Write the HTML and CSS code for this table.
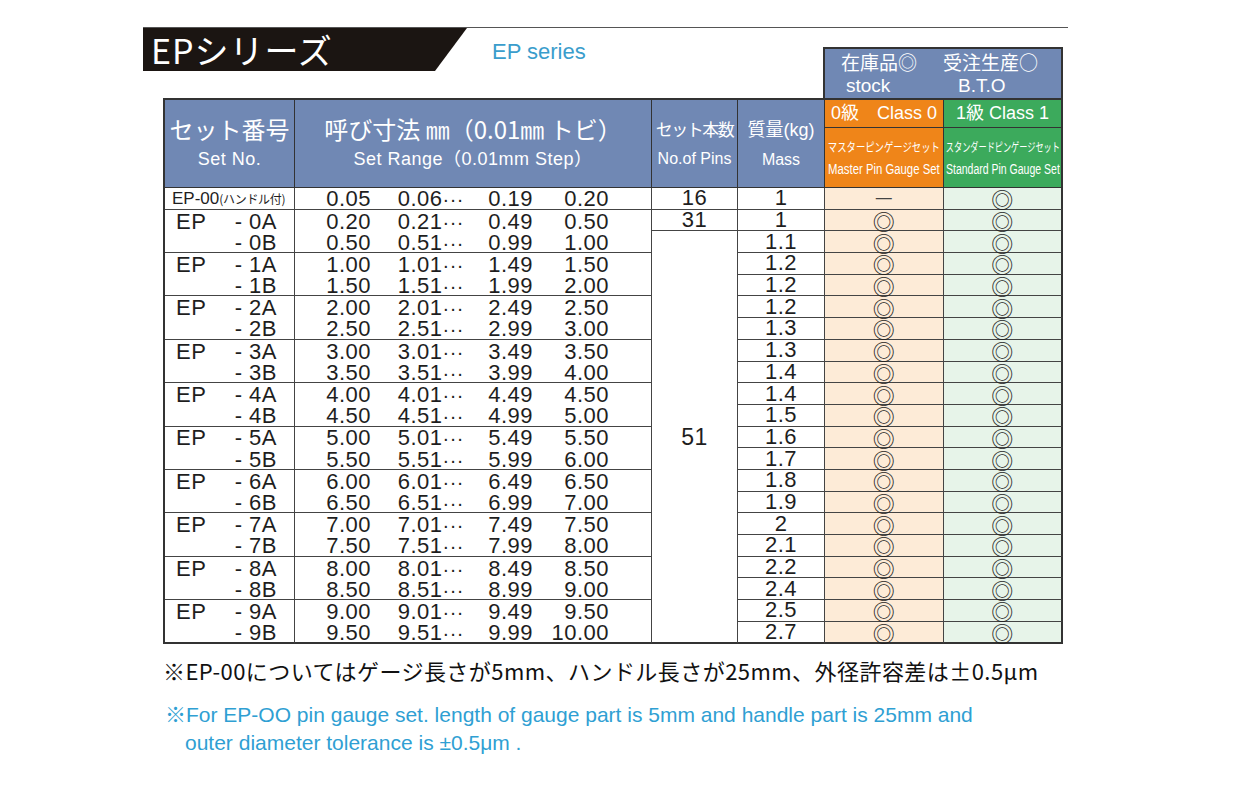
FILE: index.html
```html
<!DOCTYPE html>
<html lang="ja">
<head>
<meta charset="utf-8">
<title>EPシリーズ</title>
<link rel="stylesheet" href="styles.css">
</head>
<body>
<div class="page">
  <div class="top">
    <div class="banner">EPシリーズ</div>
    <div class="en-title">EP series</div>
    <div class="stock">
      <div class="stock-l1"><span>在庫品◎</span><span class="s-right">受注生産○</span></div>
      <div class="stock-l2"><span class="s-left">stock</span><span>B.T.O</span></div>
    </div>
  </div>

  <table class="spec">
    <colgroup>
      <col class="w-sn"><col class="w-rg"><col class="w-pn"><col class="w-ms"><col class="w-cl"><col class="w-cl">
    </colgroup>
    <thead>
      <tr class="h1">
        <th rowspan="2" class="hd"><div class="jp">セット番号</div><div class="en">Set No.</div></th>
        <th rowspan="2" class="hd"><div class="jp">呼び寸法 ㎜（0.01㎜ トビ）</div><div class="en">Set Range（0.01mm Step）</div></th>
        <th rowspan="2" class="hd"><div class="jp sm">セット本数</div><div class="en sm">No.of Pins</div></th>
        <th rowspan="2" class="hd"><div class="jp sm2">質量<span class="lat">(kg)</span></div><div class="en sm">Mass</div></th>
        <th class="c0h">0級　Class 0</th>
        <th class="c1h">1級 Class 1</th>
      </tr>
      <tr class="h2">
        <th class="c0s"><div class="sub"><span class="sub-jp m">マスターピンゲージセット</span><span class="sub-en m">Master Pin Gauge Set</span></div></th>
        <th class="c1s"><div class="sub"><span class="sub-jp s">スタンダードピンゲージセット</span><span class="sub-en s">Standard Pin Gauge Set</span></div></th>
      </tr>
    </thead>
    <tbody>
      <tr class="z">
        <td class="sn"><div class="sn00">EP-00<span class="small">(ハンドル付)</span></div></td>
        <td class="rg"><div class="rgd"><span>0.05</span><span>0.06<i>···</i></span><span>0.19</span><span>0.20</span></div></td>
        <td class="pn">16</td><td class="ms">1</td><td class="c0 nd">—</td><td class="c1">◎</td>
      </tr>
      <tr class="a">
        <td class="sn"><div class="snA"><span>EP</span><span>- 0A</span></div></td>
        <td class="rg"><div class="rgd"><span>0.20</span><span>0.21<i>···</i></span><span>0.49</span><span>0.50</span></div></td>
        <td class="pn">31</td><td class="ms">1</td><td class="c0">◎</td><td class="c1">◎</td>
      </tr>
      <tr class="b">
        <td class="sn"><div class="snB">- 0B</div></td>
        <td class="rg"><div class="rgd"><span>0.50</span><span>0.51<i>···</i></span><span>0.99</span><span>1.00</span></div></td>
        <td class="pn big" rowspan="19">51</td><td class="ms">1.1</td><td class="c0">◎</td><td class="c1">◎</td>
      </tr>
      <tr class="a">
        <td class="sn"><div class="snA"><span>EP</span><span>- 1A</span></div></td>
        <td class="rg"><div class="rgd"><span>1.00</span><span>1.01<i>···</i></span><span>1.49</span><span>1.50</span></div></td>
        <td class="ms">1.2</td><td class="c0">◎</td><td class="c1">◎</td>
      </tr>
      <tr class="b">
        <td class="sn"><div class="snB">- 1B</div></td>
        <td class="rg"><div class="rgd"><span>1.50</span><span>1.51<i>···</i></span><span>1.99</span><span>2.00</span></div></td>
        <td class="ms">1.2</td><td class="c0">◎</td><td class="c1">◎</td>
      </tr>
      <tr class="a">
        <td class="sn"><div class="snA"><span>EP</span><span>- 2A</span></div></td>
        <td class="rg"><div class="rgd"><span>2.00</span><span>2.01<i>···</i></span><span>2.49</span><span>2.50</span></div></td>
        <td class="ms">1.2</td><td class="c0">◎</td><td class="c1">◎</td>
      </tr>
      <tr class="b">
        <td class="sn"><div class="snB">- 2B</div></td>
        <td class="rg"><div class="rgd"><span>2.50</span><span>2.51<i>···</i></span><span>2.99</span><span>3.00</span></div></td>
        <td class="ms">1.3</td><td class="c0">◎</td><td class="c1">◎</td>
      </tr>
      <tr class="a">
        <td class="sn"><div class="snA"><span>EP</span><span>- 3A</span></div></td>
        <td class="rg"><div class="rgd"><span>3.00</span><span>3.01<i>···</i></span><span>3.49</span><span>3.50</span></div></td>
        <td class="ms">1.3</td><td class="c0">◎</td><td class="c1">◎</td>
      </tr>
      <tr class="b">
        <td class="sn"><div class="snB">- 3B</div></td>
        <td class="rg"><div class="rgd"><span>3.50</span><span>3.51<i>···</i></span><span>3.99</span><span>4.00</span></div></td>
        <td class="ms">1.4</td><td class="c0">◎</td><td class="c1">◎</td>
      </tr>
      <tr class="a">
        <td class="sn"><div class="snA"><span>EP</span><span>- 4A</span></div></td>
        <td class="rg"><div class="rgd"><span>4.00</span><span>4.01<i>···</i></span><span>4.49</span><span>4.50</span></div></td>
        <td class="ms">1.4</td><td class="c0">◎</td><td class="c1">◎</td>
      </tr>
      <tr class="b">
        <td class="sn"><div class="snB">- 4B</div></td>
        <td class="rg"><div class="rgd"><span>4.50</span><span>4.51<i>···</i></span><span>4.99</span><span>5.00</span></div></td>
        <td class="ms">1.5</td><td class="c0">◎</td><td class="c1">◎</td>
      </tr>
      <tr class="a">
        <td class="sn"><div class="snA"><span>EP</span><span>- 5A</span></div></td>
        <td class="rg"><div class="rgd"><span>5.00</span><span>5.01<i>···</i></span><span>5.49</span><span>5.50</span></div></td>
        <td class="ms">1.6</td><td class="c0">◎</td><td class="c1">◎</td>
      </tr>
      <tr class="b">
        <td class="sn"><div class="snB">- 5B</div></td>
        <td class="rg"><div class="rgd"><span>5.50</span><span>5.51<i>···</i></span><span>5.99</span><span>6.00</span></div></td>
        <td class="ms">1.7</td><td class="c0">◎</td><td class="c1">◎</td>
      </tr>
      <tr class="a">
        <td class="sn"><div class="snA"><span>EP</span><span>- 6A</span></div></td>
        <td class="rg"><div class="rgd"><span>6.00</span><span>6.01<i>···</i></span><span>6.49</span><span>6.50</span></div></td>
        <td class="ms">1.8</td><td class="c0">◎</td><td class="c1">◎</td>
      </tr>
      <tr class="b">
        <td class="sn"><div class="snB">- 6B</div></td>
        <td class="rg"><div class="rgd"><span>6.50</span><span>6.51<i>···</i></span><span>6.99</span><span>7.00</span></div></td>
        <td class="ms">1.9</td><td class="c0">◎</td><td class="c1">◎</td>
      </tr>
      <tr class="a">
        <td class="sn"><div class="snA"><span>EP</span><span>- 7A</span></div></td>
        <td class="rg"><div class="rgd"><span>7.00</span><span>7.01<i>···</i></span><span>7.49</span><span>7.50</span></div></td>
        <td class="ms">2</td><td class="c0">◎</td><td class="c1">◎</td>
      </tr>
      <tr class="b">
        <td class="sn"><div class="snB">- 7B</div></td>
        <td class="rg"><div class="rgd"><span>7.50</span><span>7.51<i>···</i></span><span>7.99</span><span>8.00</span></div></td>
        <td class="ms">2.1</td><td class="c0">◎</td><td class="c1">◎</td>
      </tr>
      <tr class="a">
        <td class="sn"><div class="snA"><span>EP</span><span>- 8A</span></div></td>
        <td class="rg"><div class="rgd"><span>8.00</span><span>8.01<i>···</i></span><span>8.49</span><span>8.50</span></div></td>
        <td class="ms">2.2</td><td class="c0">◎</td><td class="c1">◎</td>
      </tr>
      <tr class="b">
        <td class="sn"><div class="snB">- 8B</div></td>
        <td class="rg"><div class="rgd"><span>8.50</span><span>8.51<i>···</i></span><span>8.99</span><span>9.00</span></div></td>
        <td class="ms">2.4</td><td class="c0">◎</td><td class="c1">◎</td>
      </tr>
      <tr class="a">
        <td class="sn"><div class="snA"><span>EP</span><span>- 9A</span></div></td>
        <td class="rg"><div class="rgd"><span>9.00</span><span>9.01<i>···</i></span><span>9.49</span><span>9.50</span></div></td>
        <td class="ms">2.5</td><td class="c0">◎</td><td class="c1">◎</td>
      </tr>
      <tr class="b last">
        <td class="sn"><div class="snB">- 9B</div></td>
        <td class="rg"><div class="rgd"><span>9.50</span><span>9.51<i>···</i></span><span>9.99</span><span>10.00</span></div></td>
        <td class="ms">2.7</td><td class="c0">◎</td><td class="c1">◎</td>
      </tr>
    </tbody>
  </table>

  <p class="note-ja">※EP-00についてはゲージ長さが5mm、ハンドル長さが25mm、外径許容差は±0.5μm</p>
  <p class="note-en">※For EP-OO pin gauge set. length of gauge part is 5mm and handle part is 25mm and outer diameter tolerance is ±0.5μm .</p>
</div>
</body>
</html>
```

FILE: styles.css
```css
* { box-sizing: border-box; }

body {
  margin: 0;
  background: #ffffff;
  color: #1e1e1e;
  font-family: "Liberation Sans", "Noto Sans CJK JP", sans-serif;
}

.page {
  width: 925px;
  margin-left: 143px;
  padding-top: 27px;
}

/* ---------- top band ---------- */
.top {
  display: flex;
  align-items: flex-start;
  height: 71px;
  border-top: 1px solid #555;
}

.banner {
  width: 324px;
  height: 43px;
  padding-left: 8px;
  background: #1b1512;
  clip-path: polygon(0 0, 100% 0, calc(100% - 32px) 100%, 0 100%);
  color: #ffffff;
  font-family: "Noto Sans CJK JP", sans-serif;
  font-weight: 400;
  font-size: 34px;
  line-height: 43px;
  letter-spacing: 1px;
  white-space: nowrap;
}

.en-title {
  margin: 11px 0 0 25px;
  color: #3a9dcc;
  font-size: 22px;
  line-height: 26px;
}

.stock {
  width: 240px;
  height: 51px;
  margin: 19px 5px 0 auto;
  padding-top: 1px;
  border: 2px solid #333;
  border-bottom: 0;
  background: #7088b4;
  color: #ffffff;
  font-size: 19px;
  line-height: 24px;
  white-space: nowrap;
}

.stock-l1 {
  padding-left: 16px;
  font-family: "Noto Sans CJK JP", sans-serif;
}

.s-right { margin-left: 26px; }

.stock-l2 { padding-left: 21px; }

.s-left {
  display: inline-block;
  width: 112px;
}

/* ---------- table ---------- */
.spec {
  margin-left: 20px;
  width: 900px;
  table-layout: fixed;
  border-collapse: separate;
  border-spacing: 0;
  border-left: 2px solid #333;
  border-top: 2px solid #333;
}

.w-sn { width: 130px; }
.w-rg { width: 357px; }
.w-pn { width: 86px; }
.w-ms { width: 87px; }
.w-cl { width: 119px; }

.spec th,
.spec td {
  padding: 0;
  border-right: 1px solid #444;
  border-bottom: 1px solid #444;
  white-space: nowrap;
}

.spec th {
  background: #7088b4;
  color: #ffffff;
  font-weight: normal;
  border-color: #333;
  text-align: center;
}

.h1 { height: 28px; }
.h2 { height: 60px; }

.hd .jp {
  font-family: "Noto Sans CJK JP", sans-serif;
  font-size: 24px;
  line-height: 30px;
}

.hd .en {
  font-size: 18px;
  line-height: 30px;
  letter-spacing: 0.5px;
}

.hd .jp.sm {
  font-size: 17px;
  letter-spacing: -1.5px;
}

.hd .jp.sm2 {
  font-size: 18px;
}

.hd .jp .lat {
  font-family: "Liberation Sans", sans-serif;
}

.hd .en.sm {
  font-size: 16px;
  letter-spacing: 0;
}

.c0h, .c1h {
  font-size: 18px;
  line-height: 27px;
}

.c0h, .c0s { background: #ef8519 !important; }
.c1h, .c1s { background: #3caa5c !important; }

.c1h, .c1s, .c1 { border-right: 2px solid #333 !important; }

.sub {
  display: flex;
  flex-direction: column;
  align-items: center;
}

.sub span {
  display: block;
  height: 23px;
  line-height: 23px;
  white-space: nowrap;
}

.sub-jp {
  font-family: "Noto Sans CJK JP", sans-serif;
  font-size: 12px;
}

.sub-jp.m { transform: scaleX(0.78); }
.sub-jp.s { transform: scaleX(0.68); }

.sub-en { font-size: 14px; }
.sub-en.m { transform: scaleX(0.81); }
.sub-en.s { transform: scaleX(0.75); }

/* body rows */
.spec tbody tr { height: 21.7px; }

.spec td {
  height: 21.7px;
  font-size: 22px;
  line-height: 20px;
  letter-spacing: 0.5px;
  color: #1e1e1e;
}

.a .sn, .a .rg { border-bottom: 0; }

.sn00, .snA, .snB, .rgd {
  height: 20px;
  line-height: 21px;
  overflow: visible;
}

.sn00 {
  padding-left: 7px;
  font-size: 17px;
  letter-spacing: 0;
}

.small {
  font-family: "Noto Sans CJK JP", sans-serif;
  font-size: 12px;
  line-height: 12px;
  letter-spacing: -0.3px;
}

.snA {
  display: flex;
  justify-content: space-between;
  padding: 0 17px 0 11px;
}

.snB {
  text-align: right;
  padding-right: 17px;
}

.rgd {
  display: grid;
  grid-template-columns: 76px 93px 69px 76px;
  justify-items: end;
}

.rgd span { height: 20px; }

.rgd i {
  font-style: normal;
  font-size: 20px;
  line-height: 12px;
  letter-spacing: 0.5px;
}

.pn, .ms { text-align: center; }

.pn.big {
  font-size: 23px;
  vertical-align: middle;
}

.c0, .c1 {
  text-align: center;
  font-family: "Noto Sans CJK JP", sans-serif;
  font-size: 17px;
  line-height: 20px;
  color: #555;
}

.c0 { background: #fdebd7; }
.c1 { background: #e7f4e9; }

.c0.nd {
  font-family: "Liberation Sans", sans-serif;
  font-size: 16px;
  color: #444;
}

.last td, .pn.big { border-bottom: 2px solid #333; }

/* ---------- notes ---------- */
.note-ja {
  margin: 13px 0 0 20px;
  font-family: "Noto Sans CJK JP", sans-serif;
  font-size: 22px;
  line-height: 26px;
  letter-spacing: 0.45px;
  color: #111;
  white-space: nowrap;
}

.note-en {
  width: 830px;
  margin: 18px 0 0 22px;
  padding-left: 20px;
  text-indent: -20px;
  color: #2f9fd3;
  font-size: 21px;
  line-height: 28px;
}
```
